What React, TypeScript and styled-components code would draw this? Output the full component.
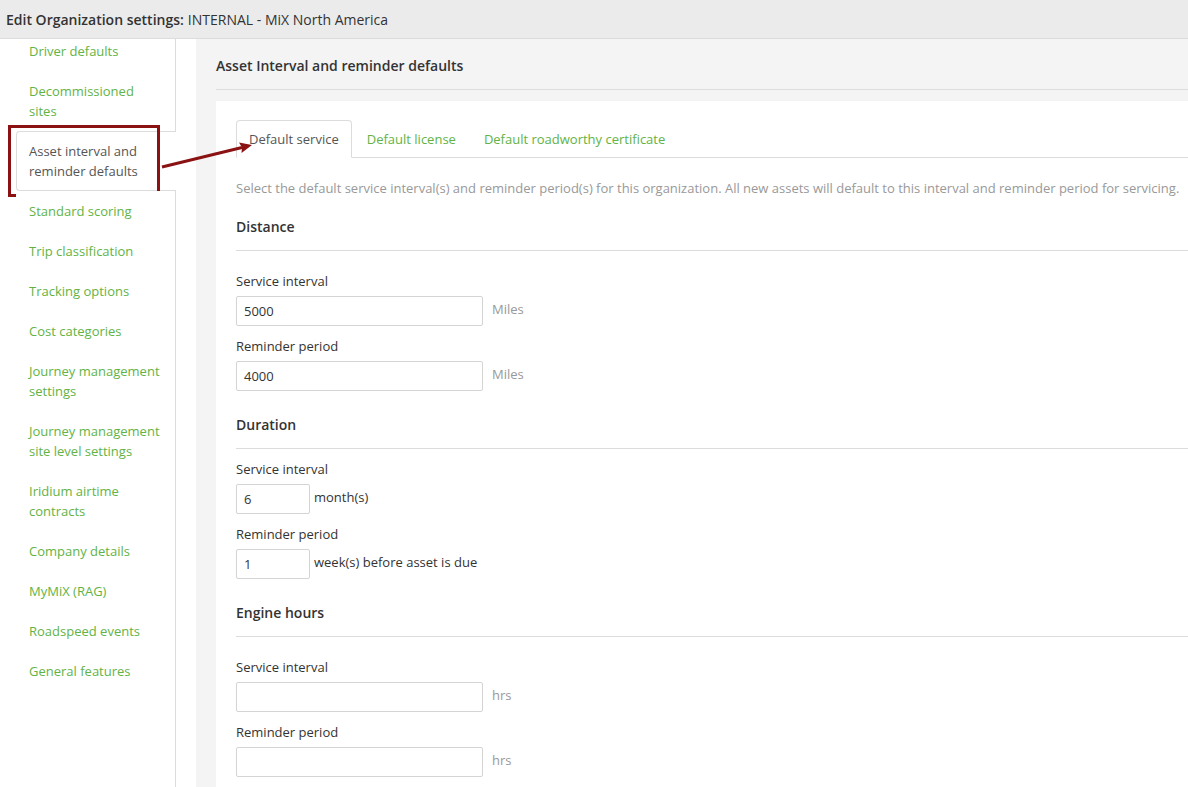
import { FC } from 'react';
import styled, { createGlobalStyle } from 'styled-components';

const GlobalStyle = createGlobalStyle`
  html, body {
    margin: 0;
    padding: 0;
    background: #fff;
    overflow: hidden;
  }
  body {
    font-family: 'Open Sans', 'Liberation Sans', Arial, sans-serif;
    font-size: 13px;
    color: #333;
  }
  * {
    box-sizing: border-box;
  }
`;

const Page = styled.div`
  position: relative;
  width: 1188px;
  height: 787px;
  display: flex;
  flex-direction: column;
  overflow: hidden;
`;

const Header = styled.div`
  height: 39px;
  flex: none;
  background: #ebebeb;
  border-bottom: 1px solid #dcdcdc;
  padding: 0 6px;
  display: flex;
  align-items: center;
  font-size: 14px;
  color: #333;
`;

const HeaderLabel = styled.span`
  font-weight: 600;
  margin-right: 4px;
`;

const Body = styled.div`
  flex: 1;
  display: flex;
  min-height: 0;
`;

const Sidebar = styled.ul`
  width: 176px;
  flex: none;
  margin: 0;
  padding: 0;
  list-style: none;
  border-right: 1px solid #dcdcdc;
  background: #fff;
`;

const NavItem = styled.li<{ $active?: boolean }>`
  position: relative;
  margin-left: 16px;
  margin-right: ${p => (p.$active ? '-1px' : '0')};
  padding: 9px 12px 9px 12px;
  line-height: 20px;
  font-size: 13px;
  color: ${p => (p.$active ? '#555' : '#62b346')};
  background: #fff;
  border: 1px solid ${p => (p.$active ? '#dcdcdc' : 'transparent')};
  border-right: none;
  border-radius: 4px 0 0 4px;

  &:first-child {
    padding-top: 1px;
  }
`;

const Callout = styled.span`
  position: absolute;
  left: -9px;
  top: -7px;
  right: 16px;
  bottom: -7px;
  border: 3px solid #8a1212;
  pointer-events: none;
`;

const Arrow = styled.svg`
  position: absolute;
  left: 160px;
  top: 138px;
  overflow: visible;
`;

const Main = styled.div`
  flex: 1;
  padding-left: 20px;
  background: #fff;
  min-width: 0;
`;

const Panel = styled.div`
  height: 100%;
  background: #f4f4f4;
  padding: 17px 0 0 20px;
`;

const PanelTitle = styled.h2`
  margin: 0 0 11px;
  padding-bottom: 13px;
  border-bottom: 1px solid #dcdcdc;
  font-size: 14px;
  font-weight: 600;
  line-height: 20px;
  color: #333;
`;

const Card = styled.div`
  background: #fff;
  padding: 19px 0 0 20px;
  height: 100%;
`;

const Tabs = styled.ul`
  display: flex;
  margin: 0;
  padding: 0;
  list-style: none;
  border-bottom: 1px solid #dcdcdc;
`;

const Tab = styled.li<{ $active?: boolean }>`
  margin-right: 2px;
  margin-bottom: -1px;
  padding: 8px 12px;
  line-height: 20px;
  font-size: 13px;
  color: ${p => (p.$active ? '#555' : '#62b346')};
  background: ${p => (p.$active ? '#fff' : 'transparent')};
  border: 1px solid ${p => (p.$active ? '#dcdcdc' : 'transparent')};
  border-bottom-color: ${p => (p.$active ? '#fff' : 'transparent')};
  border-radius: 4px 4px 0 0;
`;

const Intro = styled.p`
  margin: 20px 0 0;
  line-height: 20px;
  color: #999;
  white-space: nowrap;
`;

const SectionTitle = styled.h3`
  margin: 0;
  padding-bottom: 13px;
  border-bottom: 1px solid #dcdcdc;
  font-size: 14px;
  font-weight: 600;
  line-height: 20px;
  color: #333;
`;

const Section = styled.section<{ $first?: boolean }>`
  margin-top: ${p => (p.$first ? '19px' : '24px')};
`;

const Fields = styled.div<{ $tight?: boolean }>`
  display: flex;
  flex-direction: column;
  gap: 10px;
  padding-top: ${p => (p.$tight ? '10px' : '20px')};
`;

const Field = styled.div`
  display: flex;
  flex-direction: column;
  gap: 5px;
`;

const Label = styled.label`
  line-height: 20px;
  color: #333;
`;

const InputRow = styled.div<{ $gap: number }>`
  display: flex;
  align-items: center;
  gap: ${p => p.$gap}px;
`;

const Input = styled.input<{ $small?: boolean }>`
  width: ${p => (p.$small ? '74px' : '247px')};
  height: 30px;
  padding: 0 7px;
  border: 1px solid #d4d4d4;
  border-radius: 2px;
  font-family: inherit;
  font-size: 13px;
  color: #333;
  background: #fff;
  outline: none;
`;

const Unit = styled.span<{ $muted?: boolean }>`
  line-height: 20px;
  margin-top: -4px;
  color: ${p => (p.$muted ? '#999' : '#333')};
`;

const navItems = [
  'Driver defaults',
  'Decommissioned sites',
  'Asset interval and reminder defaults',
  'Standard scoring',
  'Trip classification',
  'Tracking options',
  'Cost categories',
  'Journey management settings',
  'Journey management site level settings',
  'Iridium airtime contracts',
  'Company details',
  'MyMiX (RAG)',
  'Roadspeed events',
  'General features',
];

type FieldDef = { label: string; value: string; unit: string; small?: boolean };

const sections: { title: string; tight?: boolean; fields: FieldDef[] }[] = [
  {
    title: 'Distance',
    fields: [
      { label: 'Service interval', value: '5000', unit: 'Miles' },
      { label: 'Reminder period', value: '4000', unit: 'Miles' },
    ],
  },
  {
    title: 'Duration',
    tight: true,
    fields: [
      { label: 'Service interval', value: '6', unit: 'month(s)', small: true },
      {
        label: 'Reminder period',
        value: '1',
        unit: 'week(s) before asset is due',
        small: true,
      },
    ],
  },
  {
    title: 'Engine hours',
    fields: [
      { label: 'Service interval', value: '', unit: 'hrs' },
      { label: 'Reminder period', value: '', unit: 'hrs' },
    ],
  },
];

const App: FC = () => (
  <Page>
    <GlobalStyle />
    <Header>
      <HeaderLabel>Edit Organization settings:</HeaderLabel>
      INTERNAL - MiX North America
    </Header>
    <Body>
      <Sidebar>
        {navItems.map(item => {
          const active = item === 'Asset interval and reminder defaults';
          return (
            <NavItem key={item} $active={active}>
              {item}
              {active && <Callout />}
            </NavItem>
          );
        })}
      </Sidebar>
      <Main>
        <Panel>
          <PanelTitle>Asset Interval and reminder defaults</PanelTitle>
          <Card>
            <Tabs>
              <Tab $active>Default service</Tab>
              <Tab>Default license</Tab>
              <Tab>Default roadworthy certificate</Tab>
            </Tabs>
            <Intro>
              Select the default service interval(s) and reminder period(s) for
              this organization. All new assets will default to this interval and
              reminder period for servicing.
            </Intro>
            {sections.map((s, i) => (
              <Section key={s.title} $first={i === 0}>
                <SectionTitle>{s.title}</SectionTitle>
                <Fields $tight={s.tight}>
                  {s.fields.map(f => (
                    <Field key={f.label}>
                      <Label>{f.label}</Label>
                      <InputRow $gap={f.small ? 4 : 9}>
                        <Input $small={f.small} defaultValue={f.value} />
                        <Unit $muted={!f.small}>{f.unit}</Unit>
                      </InputRow>
                    </Field>
                  ))}
                </Fields>
              </Section>
            ))}
          </Card>
        </Panel>
      </Main>
    </Body>
    {/* pointer from the selected menu entry to the open tab */}
    <Arrow width="96" height="34" viewBox="0 0 96 34">
      <line x1="2" y1="29" x2="82" y2="9.5" stroke="#8a1212" strokeWidth="3" />
      <polygon points="92,7 79,4.5 82,9.5 81.5,15" fill="#8a1212" />
    </Arrow>
  </Page>
);

export default App;
